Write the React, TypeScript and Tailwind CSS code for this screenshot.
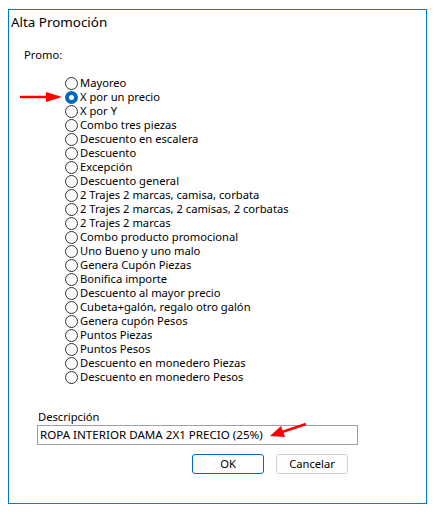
import React from "react";

const items = [
  "Mayoreo",
  "X por un precio",
  "X por Y",
  "Combo tres piezas",
  "Descuento en escalera",
  "Descuento",
  "Excepción",
  "Descuento general",
  "2 Trajes 2 marcas, camisa, corbata",
  "2 Trajes 2 marcas, 2 camisas, 2 corbatas",
  "2 Trajes 2 marcas",
  "Combo producto promocional",
  "Uno Bueno y uno malo",
  "Genera Cupón Piezas",
  "Bonifica importe",
  "Descuento al mayor precio",
  "Cubeta+galón, regalo otro galón",
  "Genera cupón Pesos",
  "Puntos Piezas",
  "Puntos Pesos",
  "Descuento en monedero Piezas",
  "Descuento en monedero Pesos",
];

function Radio({ checked }: { checked: boolean }) {
  return checked ? (
    <span className="w-[13px] h-[13px] rounded-full bg-[#0067c0] flex items-center justify-center shrink-0">
      <span className="w-[5px] h-[5px] rounded-full bg-white" />
    </span>
  ) : (
    <span className="w-[13px] h-[13px] rounded-full border border-[#333] bg-[#fbfbfb] shrink-0" />
  );
}

export default function App() {
  return (
    <div
      className="relative w-[434px] h-[514px] bg-white text-black text-[11.2px]"
      style={{ fontFamily: '"Noto Sans", "DejaVu Sans", sans-serif' }}
    >
      <div className="absolute left-0 top-0 pt-[9px] pl-[8px]">
        <div className="w-[419px] h-[495px] border border-[#0078d7] flex flex-col">
          <div className="pl-[2px] pt-[4px] leading-[16px] text-[13.4px]">Alta Promoción</div>
          <div className="pl-[15px] mt-[17px] leading-[16px]">Promo:</div>
          <div className="mt-[13px] pl-[56px] flex flex-col">
            {items.map((t, i) => (
              <div key={t} className="h-[14px] flex items-center gap-[2px] leading-[14px]">
                <Radio checked={i === 1} />
                <span className="whitespace-nowrap">{t}</span>
              </div>
            ))}
          </div>
          <div className="mt-[26px] pl-[29px] leading-[14px]">Descripción</div>
          <div className="mt-[1px] ml-[28px] w-[321px] h-[20px] border border-[#a0a0a0] flex items-center pl-[2px] leading-[14px] text-[11.6px]">
            ROPA INTERIOR DAMA 2X1 PRECIO (25%)
          </div>
          <div className="mt-[9px] ml-[183px] flex gap-[12px]">
            <button className="w-[72px] h-[20px] rounded-[3px] border border-[#0067c0] bg-[#fdfdfd] flex items-center justify-center leading-[14px]">
              OK
            </button>
            <button className="w-[72px] h-[20px] rounded-[3px] border border-[#d0d0d0] bg-[#fdfdfd] flex items-center justify-center leading-[14px]">
              Cancelar
            </button>
          </div>
        </div>
      </div>
      <svg className="absolute left-0 top-0" width="434" height="514" viewBox="0 0 434 514">
        <line x1="20" y1="97" x2="50" y2="97" stroke="#ff0000" strokeWidth="2.5" />
        <polygon points="46,92 62,97 46,102" fill="#ff0000" />
        <line x1="306" y1="424" x2="282" y2="432" stroke="#ff0000" strokeWidth="2.5" />
        <polygon points="270,436 281,426 285,437" fill="#ff0000" />
      </svg>
    </div>
  );
}
